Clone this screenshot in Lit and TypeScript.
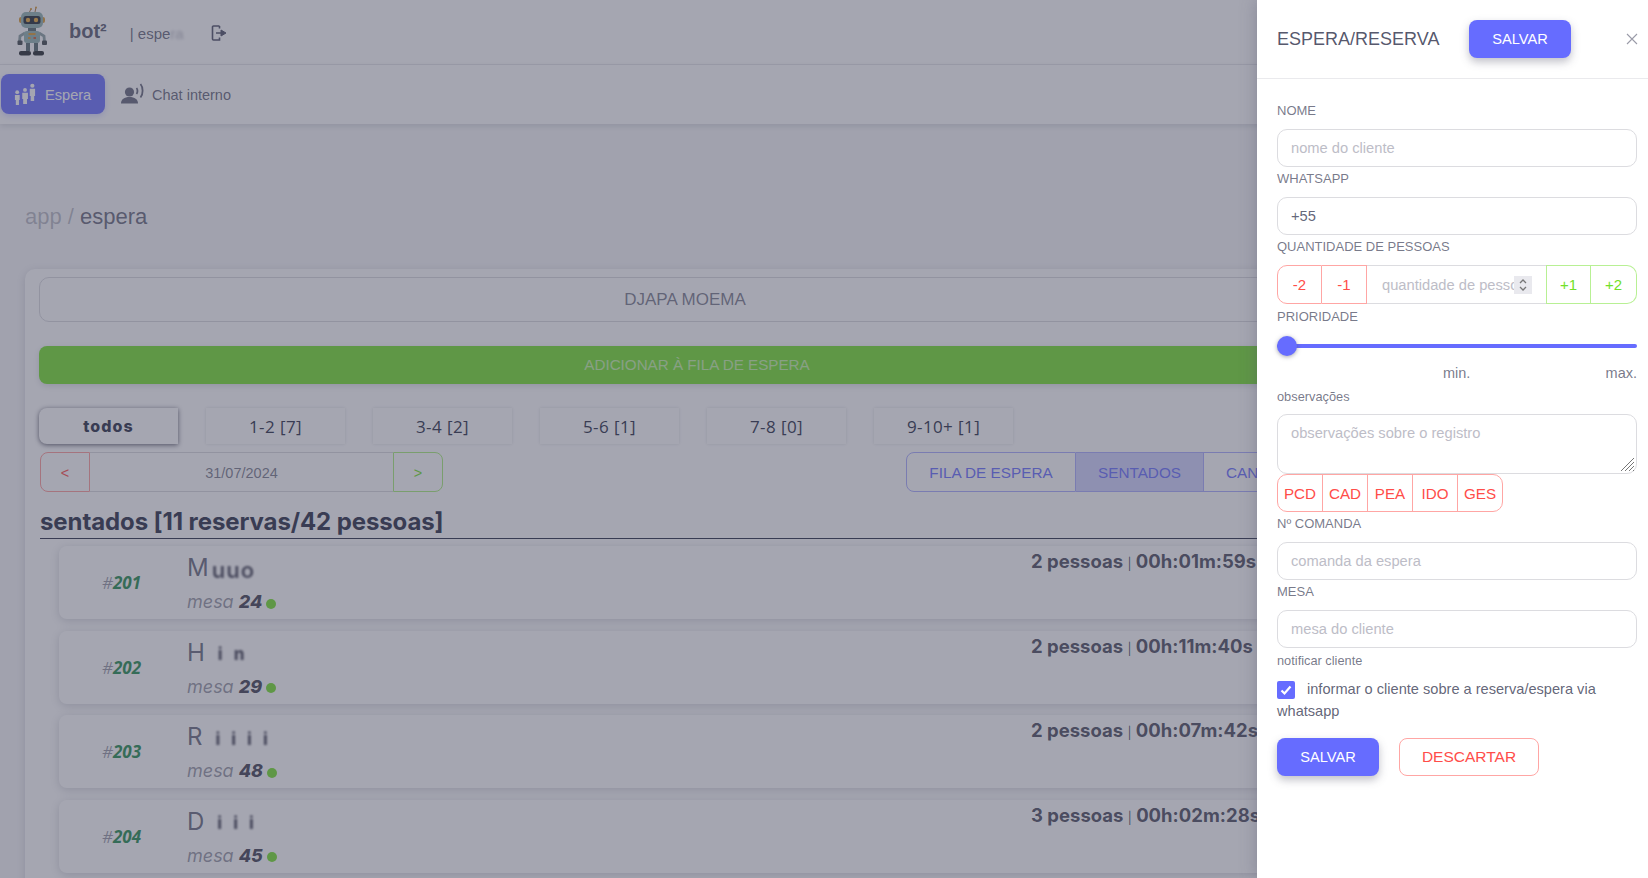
import { LitElement, html, css, svg } from "lit";
import { customElement } from "lit/decorators.js";

const robot = svg`<svg width="50" height="56" viewBox="0 0 50 56">
  <path d="M21 9 L23 5 M27 8 L28 3.500" stroke="#a5713a" stroke-width="1"/>
  <circle cx="23" cy="5" r="1.100" fill="#d9982f"/><circle cx="28" cy="3.500" r="1" fill="#d9982f"/>
  <rect x="11" y="13" width="4" height="6" rx="2" fill="#d9982f"/><rect x="33" y="13" width="4" height="6" rx="2" fill="#d9982f"/>
  <rect x="13" y="8" width="22" height="16" rx="5" fill="#8fb0ae"/>
  <rect x="15.500" y="12" width="17" height="8" rx="2.500" fill="#1d2630"/>
  <circle cx="20" cy="16" r="2.200" fill="#e7a636"/><circle cx="28" cy="16" r="2.200" fill="#e7a636"/>
  <rect x="20" y="24" width="8" height="3" fill="#55686c"/>
  <path d="M17 29 L12 32 L11.500 38 M31 29 L36 32 L36.500 38" stroke="#8a9fa0" stroke-width="2.800" fill="none"/>
  <rect x="9.500" y="36.500" width="5" height="4.500" rx="1" fill="#3c4448"/><rect x="34" y="36.500" width="5" height="4.500" rx="1" fill="#3c4448"/>
  <rect x="16" y="27" width="16" height="12" rx="3" fill="#8fb0ae"/>
  <rect x="20.500" y="29" width="7" height="2" fill="#d9982f"/><rect x="20" y="33" width="2.500" height="2" fill="#d9982f"/><rect x="25.500" y="33" width="2.500" height="2" fill="#c65a36"/>
  <path d="M20 39 V47 M28 39 V47" stroke="#55686c" stroke-width="4"/>
  <rect x="11" y="47" width="12" height="4.500" rx="2" fill="#20262a"/><rect x="25" y="47" width="11" height="4.500" rx="2" fill="#20262a"/>
</svg>`;

const people = svg`<svg width="22" height="22" viewBox="0 0 24 24" fill="currentColor">
  <circle cx="3.500" cy="10" r="2.100"/><path d="M1 13h5.200v5.500H5.400V24H2v-5.500H1z"/>
  <circle cx="12" cy="7.500" r="2.100"/><path d="M9 10.500h6.200v7h-1v5.500H10v-5.500H9z"/>
  <circle cx="20" cy="3" r="2.300"/><path d="M17.200 6.300H23v8h-1v5.200h-3.800v-5.200h-1z"/>
</svg>`;

const speaker = svg`<svg width="24" height="22" viewBox="0 0 24 22" fill="currentColor">
  <circle cx="8.500" cy="9" r="4.600"/><path d="M0 20.500c0-4 3.400-6.400 8.500-6.400s8.500 2.400 8.500 6.400z"/>
  <path d="M15.500 5c1.300 1.500 1.300 4.500 0 6" stroke="currentColor" stroke-width="1.800" fill="none"/>
  <path d="M19.500 1c2.800 3.300 2.800 10.500 0 13.500" stroke="currentColor" stroke-width="1.800" fill="none"/>
</svg>`;

const logout = svg`<svg width="16" height="16" viewBox="0 0 16 16" fill="none" stroke="currentColor" stroke-width="1.600">
  <path d="M8.500 1H2.500a1 1 0 0 0-1 1v12a1 1 0 0 0 1 1h6v-2.500M8.500 1v2.500"/>
  <path d="M5 8h5V5l5 3-5 3V8z" fill="currentColor" stroke-width="1"/>
</svg>`;

const rows = [
  { n: "201", first: "M", rest: "uuo", table: "24", p: "2", t: "00h:01m:59s", tight: true },
  { n: "202", first: "H", rest: "in", table: "29", p: "2", t: "00h:11m:40s", tight: false },
  { n: "203", first: "R", rest: "iiii", table: "48", p: "2", t: "00h:07m:42s", tight: false },
  { n: "204", first: "D", rest: "iii", table: "45", p: "3", t: "00h:02m:28s", tight: false },
];

@customElement("app-root")
export class AppRoot extends LitElement {
  static styles = css`
    :host { display: block; position: relative; width: 1648px; height: 878px; overflow: hidden; background: #f7f7f9; font-family: "Liberation Sans", Arial, sans-serif; color: rgba(76,78,100,.87); }
    * { box-sizing: border-box; }
    .top { height: 65px; background: #fff; border-bottom: 1px solid #eaeaed; display: flex; align-items: center; padding-left: 8px; }
    .logo { display: flex; }
    .brand { font: 700 20px "Liberation Sans", sans-serif; margin-left: 11px; margin-bottom: 1px; color: rgba(76,78,100,.95); }
    .env { font-size: 15px; margin-left: 23px; color: rgba(76,78,100,.87); white-space: nowrap; width: 81px; margin-top: 2px; }
    .env i { font-style: normal; filter: blur(1.500px); opacity: .45; }
    .out { color: #4c4e64; display: flex; margin-top: 2px; }
    .nav { height: 59px; padding-bottom: 1px; background: #fff; box-shadow: 0 2px 6px rgba(76,78,100,.2); display: flex; align-items: center; padding-left: 1px; position: relative; }
    .nav-a { width: 104px; height: 40px; border-radius: 8px; background: #666cff; color: #fff; display: flex; align-items: center; padding-left: 13px; gap: 9px; font-size: 14.600px; box-shadow: 0 2px 6px rgba(102,108,255,.3); }
    .nav-a span, .nav-b span { padding-top: 2px; }
    .nav-b { display: flex; align-items: center; gap: 7px; margin-left: 16px; font-size: 14.500px; color: rgba(76,78,100,.87); }
    .crumb { margin: 81px 0 0 25px; font-size: 22px; line-height: 24px; color: rgba(76,78,100,.87); height: 24px; }
    .crumb span { color: rgba(76,78,100,.38); }
    .card { margin: 0 0 0 25px; margin-top: 40px; width: 1340px; background: #fff; border-radius: 10px; box-shadow: 0 2px 10px rgba(76,78,100,.22); padding: 8px 14px; height: 640px; }
    .store { width: 1292px; height: 45px; border: 1px solid #d8d8dd; border-radius: 10px; display: flex; align-items: center; justify-content: center; font-size: 17px; color: rgba(76,78,100,.75); }
    .add { margin-top: 24px; padding-bottom: 2px; width: 1316px; height: 38px; border-radius: 8px; background: #72e128; color: rgba(255,255,255,.6); display: flex; align-items: center; justify-content: center; font-size: 15.200px; box-shadow: 0 2px 6px rgba(76,78,100,.2); }
    .filters { display: flex; gap: 28px; margin-top: 24px; }
    .f { width: 139px; height: 36px; display: flex; align-items: center; justify-content: center; font: 500 17px "Open Sans", sans-serif; letter-spacing: .4px; color: #262b43; background: #fff; box-shadow: 0 0 3px rgba(76,78,100,.2); }
    .f.on { border-radius: 8px 0 0 8px; font-weight: 800; font-family: Inter, sans-serif; font-size: 16px; letter-spacing: 1.100px; box-shadow: 0 1px 5px rgba(30,30,50,.75); }
    .ctl { display: flex; margin-top: 8px; height: 40px; padding-left: 1px; font-size: 14.500px; }
    .pager { display: flex; width: 403px; }
    .pager div { display: flex; align-items: center; justify-content: center; border: 1px solid #d8d8dd; padding-top: 2px; }
    .prev { width: 50px; color: #ff4d49; border-color: #ff9a98 !important; border-radius: 8px 0 0 8px; }
    .date { flex: 1; border-width: 1px 0 !important; color: rgba(76,78,100,.75); }
    .next { width: 50px; color: #72e128; border-color: #a8ee78 !important; border-radius: 0 8px 8px 0; }
    .tabs { display: flex; margin-left: 463px; color: #666cff; font-size: 15.300px; }
    .tabs div { border: 1px solid #a8abff; border-left-width: 0; height: 40px; padding-top: 2px; display: flex; align-items: center; justify-content: center; }
    .tabs div:nth-child(1) { width: 170px; border-left-width: 1px; border-radius: 8px 0 0 8px; }
    .tabs div:nth-child(2) { width: 128px; background: rgba(102,108,255,.3); }
    .tabs div:nth-child(3) { width: 140px; justify-content: flex-start; padding-left: 22px; white-space: nowrap; }
    h2 { margin: 16px 0 0 1px; height: 31px; font: 700 24px/28px Inter, sans-serif; letter-spacing: -.1px; color: #262b43; border-bottom: 1px solid #262b43; width: 1300px; }
    .row { margin: 7px 0 0 20px; width: 1280px; height: 73px; border-radius: 8px; background: #fff; box-shadow: 0 2px 10px rgba(76,78,100,.25); display: flex; position: relative; }
    .row + .row { margin-top: 11.500px; }
    .num { width: 128px; padding-left: 43px; padding-top: 25px; font: italic 700 17px "Open Sans", sans-serif; color: #1f8a4c; }
    .num span { color: rgba(76,78,100,.6); font-weight: 400; }
    .who { width: 844px; }
    .name { font: 400 24px/30px Inter, sans-serif; margin-top: 7px; color: rgba(76,78,100,.87); height: 30px; white-space: nowrap; display: flex; align-items: center; }
    .name i { font-style: normal; font-weight: 800; font-size: 17px; filter: blur(.9px); margin: 3px 0 0 1px; padding: 0 12px 0 12px; letter-spacing: 11px; border-radius: 12px; background: rgba(255,255,255,.2); color: rgba(40,40,60,.85); }
    .name i.tight { letter-spacing: 1px; font-size: 22px; font-weight: 600; padding: 0 16px 0 2px; }
    .mesa { font: italic 400 18px/24px Inter, sans-serif; margin-top: 7px; color: rgba(76,78,100,.6); display: flex; align-items: center; }
    .mesa b { font-weight: 800; color: rgba(50,50,70,.95); margin-left: 5px; }
    .dot { width: 10px; height: 10px; border-radius: 50%; background: #72e128; margin: 3px 0 0 4px; }
    .meta { padding-top: 2px; font: 700 18.500px/26px Inter, sans-serif; white-space: nowrap; color: rgba(50,50,70,.9); }
    .meta small { font-size: 12px; font-weight: 400; }
    .backdrop { position: absolute; inset: 0; background: rgba(76,78,100,.5); }
    .panel { position: absolute; top: 0; right: 0; bottom: 0; width: 391px; background: #fff; box-shadow: 0 0 16px rgba(76,78,100,.35); }
    .ph { height: 79px; border-bottom: 1px solid #eaeaed; display: flex; align-items: center; padding: 0 10px 0 20px; position: relative; }
    .ph h3 { margin: 0; font-size: 18px; font-weight: 400; color: rgba(76,78,100,.95); white-space: nowrap; width: 192px; }
    .btn { height: 38px; border-radius: 8px; background: #666cff; color: #fff; display: flex; align-items: center; justify-content: center; font-size: 14.600px; width: 102px; box-shadow: 0 4px 8px rgba(76,78,100,.35); }
    .x { margin-left: auto; display: flex; color: #9a9ba8; }
    .pb { padding: 23px 11px 0 20px; }
    .lb { height: 18px; line-height: 18px; font-size: 13px; color: rgba(76,78,100,.75); }
    .inp { height: 38px; border: 1px solid #dcdce0; border-radius: 10px; display: flex; align-items: center; padding-left: 13px; font-size: 14.700px; color: rgba(76,78,100,.87); margin: 9px 0 3px; }
    .ph-t { color: #bdbdc7; }
    .qty { display: flex; height: 39px; margin: 9px 0 4px; font-size: 15px; }
    .qty > div { display: flex; align-items: center; justify-content: center; border: 1px solid #ffa6a4; width: 45px; color: #ff4d49; }
    .qty > div:first-child { border-radius: 10px 0 0 10px; }
    .qty > div:nth-child(2) { border-left-width: 0; }
    .qty > .g { border-color: #b8f094; color: #72e128; }
    .qty > .g:last-child { width: 46px; border-left-width: 0; border-radius: 0 10px 10px 0; }
    .qty > .mid { flex: 1; border: 1px solid #dcdce0; border-width: 1px 0; justify-content: flex-start; padding-left: 15px; color: #bdbdc7; white-space: nowrap; position: relative; font-size: 14.700px; }
    .qph { width: 132px; overflow: hidden; }
    .spin { position: absolute; right: 14px; top: 10px; width: 18px; height: 18px; background: #e9e9ee; display: flex; color: #777; }
    .slider { height: 20px; margin-top: 10px; position: relative; display: flex; align-items: center; }
    .track { height: 4px; flex: 1; background: #666cff; border-radius: 2px; }
    .thumb { position: absolute; left: 0; top: 0; width: 20px; height: 20px; border-radius: 50%; background: #666cff; box-shadow: 0 1px 4px rgba(76,78,100,.5); }
    .mm { display: flex; justify-content: space-between; padding-left: 166px; font-size: 14.500px; line-height: 18px; margin-top: 8px; color: rgba(76,78,100,.75); }
    .sm { font-size: 12.800px; line-height: 16px; margin-top: 7px; color: rgba(76,78,100,.75); }
    .ta { height: 60px; margin-top: 9px; border: 1px solid #dcdce0; border-radius: 10px; padding: 10px 13px; font-size: 14.700px; color: #bdbdc7; position: relative; }
    .grip { position: absolute; right: 1px; bottom: 1px; display: flex; }
    .tags { display: flex; width: 226px; height: 38px; margin: 0 0 3px; font-size: 15.200px; color: #ff4d49; border: 1px solid #ffa6a4; border-radius: 10px; }
    .tags div { width: 45px; display: flex; align-items: center; justify-content: center; border-left: 1px solid #ffa6a4; }
    .tags div:first-child { border-left: 0; width: 44px; }
    .notify { margin-top: 5px; }
    .chk { font-size: 14.600px; line-height: 22px; margin-top: 9px; color: rgba(76,78,100,.87); }
    .box { display: inline-flex; width: 18px; height: 18px; background: #666cff; border-radius: 2px; align-items: center; justify-content: center; vertical-align: -3px; margin-right: 12px; }
    .acts { display: flex; gap: 20px; margin-top: 16px; }
    .out-btn { height: 38px; width: 140px; border: 1px solid #ffa6a4; border-radius: 8px; color: #ff4d49; display: flex; align-items: center; justify-content: center; font-size: 15.500px; }
  `;

  render() {
    return html`
      <div class="top">
        <span class="logo">${robot}</span>
        <span class="brand">bot²</span>
        <span class="env">| espe<i>ra</i></span>
        <span class="out">${logout}</span>
      </div>
      <div class="nav">
        <div class="nav-a">${people}<span>Espera</span></div>
        <div class="nav-b">${speaker}<span>Chat interno</span></div>
      </div>
      <div class="crumb"><span>app / </span>espera</div>
      <div class="card">
        <div class="store">DJAPA MOEMA</div>
        <div class="add">ADICIONAR À FILA DE ESPERA</div>
        <div class="filters">
          <div class="f on">todos</div>
          <div class="f">1-2 [7]</div><div class="f">3-4 [2]</div><div class="f">5-6 [1]</div><div class="f">7-8 [0]</div><div class="f">9-10+ [1]</div>
        </div>
        <div class="ctl">
          <div class="pager"><div class="prev">&lt;</div><div class="date">31/07/2024</div><div class="next">&gt;</div></div>
          <div class="tabs"><div>FILA DE ESPERA</div><div>SENTADOS</div><div>CANCELADOS</div></div>
        </div>
        <h2>sentados [11 reservas/42 pessoas]</h2>
        ${rows.map(
          (r) => html`<div class="row">
            <div class="num"><span>#</span>${r.n}</div>
            <div class="who">
              <div class="name">${r.first}<i class=${r.tight ? "tight" : ""}>${r.rest}</i></div>
              <div class="mesa">mesa <b>${r.table}</b><span class="dot"></span></div>
            </div>
            <div class="meta">${r.p} pessoas <small>|</small> ${r.t}</div>
          </div>`,
        )}
      </div>
      <div class="backdrop"></div>
      <aside class="panel">
        <div class="ph">
          <h3>ESPERA/RESERVA</h3>
          <div class="btn">SALVAR</div>
          <span class="x"><svg width="12" height="12" viewBox="0 0 12 12" stroke="currentColor" stroke-width="1.100"><path d="M1 1l10 10M11 1L1 11"/></svg></span>
        </div>
        <div class="pb">
          <div class="lb">NOME</div>
          <div class="inp"><span class="ph-t">nome do cliente</span></div>
          <div class="lb">WHATSAPP</div>
          <div class="inp">+55</div>
          <div class="lb">QUANTIDADE DE PESSOAS</div>
          <div class="qty">
            <div>-2</div><div>-1</div>
            <div class="mid"><span class="qph">quantidade de pessoas</span><span class="spin"><svg width="18" height="18" viewBox="0 0 18 18" fill="none" stroke="currentColor" stroke-width="1.300"><path d="M6 7l3-3 3 3M6 11l3 3 3-3"/></svg></span></div>
            <div class="g">+1</div><div class="g">+2</div>
          </div>
          <div class="lb">PRIORIDADE</div>
          <div class="slider"><div class="track"></div><div class="thumb"></div></div>
          <div class="mm"><span>min.</span><span>max.</span></div>
          <div class="sm">observações</div>
          <div class="ta">observações sobre o registro
            <span class="grip"><svg width="15" height="15" viewBox="0 0 15 15" stroke="#777" stroke-width="1"><path d="M14 1L1 14M14 5L5 14M14 9L9 14M14 13l-1 1"/></svg></span>
          </div>
          <div class="tags"><div>PCD</div><div>CAD</div><div>PEA</div><div>IDO</div><div>GES</div></div>
          <div class="lb">Nº COMANDA</div>
          <div class="inp"><span class="ph-t">comanda da espera</span></div>
          <div class="lb">MESA</div>
          <div class="inp"><span class="ph-t">mesa do cliente</span></div>
          <div class="sm notify">notificar cliente</div>
          <div class="chk"><span class="box"><svg width="14" height="14" viewBox="0 0 14 14" fill="none" stroke="#fff" stroke-width="2.200"><path d="M2.500 7.500l3 3 6-7"/></svg></span>informar o cliente sobre a reserva/espera via whatsapp</div>
          <div class="acts"><div class="btn">SALVAR</div><div class="out-btn">DESCARTAR</div></div>
        </div>
      </aside>
    `;
  }
}
